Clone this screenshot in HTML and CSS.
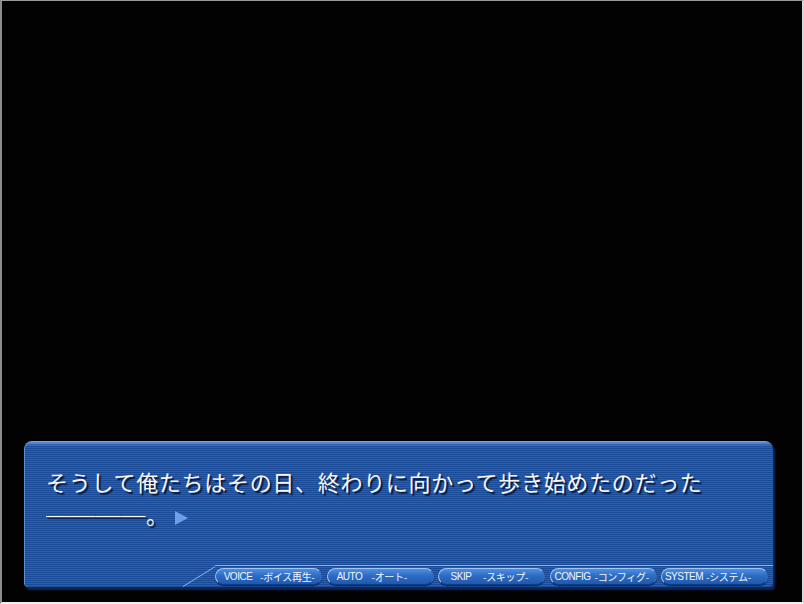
FILE: index.html
```html
<!DOCTYPE html>
<html lang="ja">
<head>
    <meta charset="UTF-8">
    <title>Message Window</title>
    <link rel="stylesheet" href="styles.css">
</head>
<body>
    <div class="screen">
        <!-- Scene area (empty, black) -->
        <div class="stage"></div>

        <!-- Message window -->
        <div class="msg">
            <p class="msg-text">そうして俺たちはその日、終わりに向かって歩き始めたのだった<br><span class="dash">────</span>。<svg class="next" width="13" height="14" viewBox="0 0 13 14"><polygon points="0,0 13,7 0,14" /></svg></p>

            <div class="bar">
                <svg class="bar-slope" width="32" height="22" viewBox="0 0 32 22">
                    <line x1="0" y1="21.5" x2="34" y2="0.5" />
                </svg>
                <div class="bar-rail">
                    <div class="btn"><span class="en">VOICE</span><span class="jp">-ボイス再生-</span></div>
                    <div class="btn"><span class="en">AUTO</span><span class="jp">-オート-</span></div>
                    <div class="btn"><span class="en">SKIP</span><span class="jp">-スキップ-</span></div>
                    <div class="btn"><span class="en">CONFIG</span><span class="jp">-コンフィグ-</span></div>
                    <div class="btn"><span class="en">SYSTEM</span><span class="jp">-システム-</span></div>
                </div>
            </div>
        </div>
    </div>
</body>
</html>
```

FILE: styles.css
```css
/* Novel game message window */
:root {
    --stripe-light: #2860b2;
    --stripe-dark: #1a4b99;
    --rail-line: #86b4ee;
    --text-color: #f6f6f6;
}

html, body {
    margin: 0;
    padding: 0;
    background: #000;
}

.screen {
    width: 804px;
    height: 604px;
    box-sizing: border-box;
    background: #020202;
    border-top: 1px solid #9a9a9a;
    border-left: 2px solid #8c8c8c;
    border-right: 2px solid #d8d8d8;
    border-bottom: 2px solid #efefef;
    padding: 0 29px 15px 22px;
    display: flex;
    flex-direction: column;
}

.stage {
    flex: 1;
}

.msg {
    height: 146px;
    display: flex;
    flex-direction: column;
    border-radius: 8px 8px 4px 4px;
    background:
        linear-gradient(to bottom, rgba(150, 190, 245, 0.8) 0, rgba(120, 165, 230, 0.35) 3px, rgba(0, 0, 0, 0) 6px),
        repeating-linear-gradient(to bottom, var(--stripe-light) 0, var(--stripe-light) 1px, var(--stripe-dark) 1px, var(--stripe-dark) 2px);
    box-shadow:
        inset 1px 0 0 rgba(140, 180, 240, 0.6),
        2px 3px 2px rgba(18, 44, 100, 0.9);
}

.msg-text {
    flex: 1;
    margin: 0;
    padding: 24px 0 0 22px;
    font-family: "Noto Sans CJK JP", sans-serif;
    font-size: 22px;
    line-height: 33px;
    letter-spacing: 0.7px;
    color: var(--text-color);
    text-shadow: 2px 2px 1px #0a1a3c;
}

.dash {
    display: inline-block;
    letter-spacing: 0;
    font-weight: bold;
    transform: scaleX(1.13);
    transform-origin: left center;
    margin-right: 12px;
}

.next {
    margin-left: 6px;
    vertical-align: -1px;
    fill: #6c9fe6;
}

.bar {
    height: 22px;
    display: flex;
}

.bar-slope {
    margin-left: 159px;
    flex: none;
}

.bar-slope line {
    stroke: var(--rail-line);
    stroke-width: 1;
}

.bar-rail {
    flex: 1;
    border-top: 1px solid var(--rail-line);
    display: flex;
    gap: 4.5px;
    padding: 2px 5px 2px 0;
}

.btn {
    width: 107px;
    box-sizing: border-box;
    border-radius: 9px;
    border: 1px solid #9fc6f4;
    border-bottom-color: #103c84;
    border-right-color: #3a6cb8;
    background: linear-gradient(to bottom, #4f8ee2 0, #2c6cc4 45%, #1f59ae 100%);
    box-shadow: 0 1px 1px rgba(5, 20, 60, 0.8);
    display: grid;
    grid-template-columns: 44px 1fr;
    align-items: center;
    color: #f2f6ff;
    font-size: 10px;
    line-height: 1;
}

.en {
    font-family: "Liberation Sans", Arial, sans-serif;
    letter-spacing: -0.5px;
    text-align: center;
}

.jp {
    font-family: "Noto Sans CJK JP", sans-serif;
    letter-spacing: -0.3px;
}
```
